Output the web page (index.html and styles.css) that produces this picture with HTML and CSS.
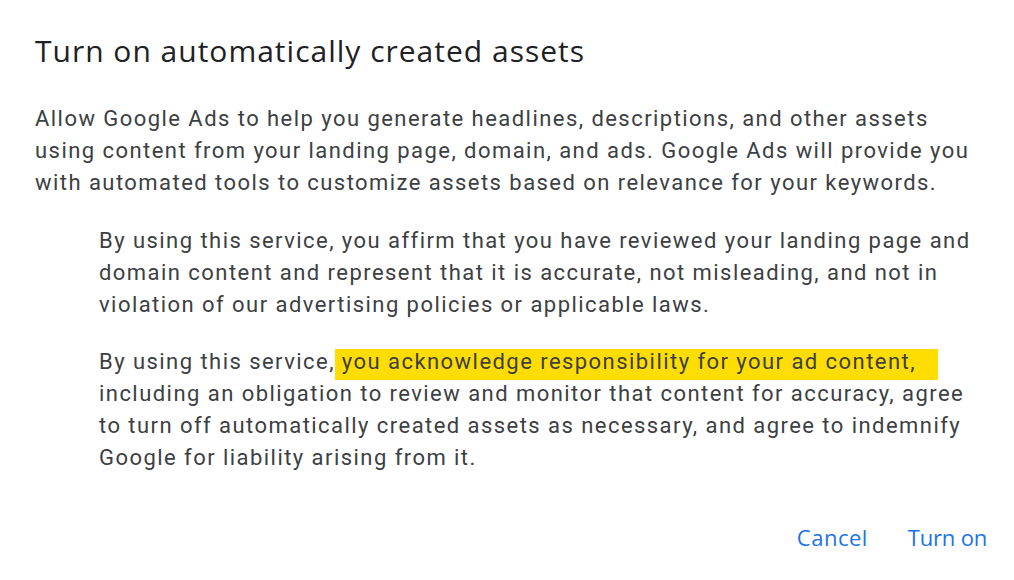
FILE: index.html
```html
<!DOCTYPE html>
<html>
<head>
<meta charset="utf-8">
<link rel="stylesheet" href="styles.css">
</head>
<body>
<div class="dialog">
  <h1 class="title">Turn on automatically created assets</h1>
  <p class="lead">Allow Google Ads to help you generate headlines, descriptions, and other assets using content from your landing page, domain, and ads. Google Ads will provide you with automated tools to customize assets based on relevance for your keywords.</p>
  <div class="terms">
    <p class="term">By using this service, you affirm that you have reviewed your landing page and domain content and represent that it is accurate, not misleading, and not in violation of our advertising policies or applicable laws.</p>
    <p class="term">By using this service,<mark class="hl"> you acknowledge responsibility for your ad content,</mark> including an obligation to review and monitor that content for accuracy, agree to turn off automatically created assets as necessary, and agree to indemnify Google for liability arising from it.</p>
  </div>
  <div class="actions">
    <button class="btn btn-cancel">Cancel</button>
    <button class="btn btn-confirm">Turn on</button>
  </div>
</div>
</body>
</html>
```
FILE: styles.css
```css
html, body {
  margin: 0;
  padding: 0;
  background: #ffffff;
}
.dialog {
  width: 1014px;
  height: 580px;
  box-sizing: border-box;
  padding: 29px 27px 0 35px;
  display: flex;
  flex-direction: column;
}
.title {
  margin: 0;
  font-family: "Open Sans", Roboto, sans-serif;
  font-weight: 400;
  font-size: 30px;
  line-height: 44px;
  letter-spacing: 1px;
  color: #202124;
}
.lead, .term {
  font-family: Roboto, "Liberation Sans", sans-serif;
  font-size: 22px;
  line-height: 32px;
  letter-spacing: 1.45px;
  color: #3c4043;
  margin: 0;
}
.lead {
  margin-top: 30px;
}
.terms {
  padding-left: 64px;
  margin-top: 26px;
  display: flex;
  flex-direction: column;
  gap: 25px;
}
.hl {
  background: #ffdd00;
  color: #3c4043;
  padding: 0 22px 6px 0;
}
.actions {
  margin-top: auto;
  margin-bottom: 28px;
  display: flex;
  justify-content: flex-end;
  gap: 40px;
}
.btn {
  background: none;
  border: 0;
  padding: 0;
  font-family: "Open Sans", Roboto, sans-serif;
  font-size: 22px;
  font-weight: 500;
  color: #1a73e8;
  cursor: pointer;
}
.btn-cancel {
  letter-spacing: 0.5px;
}
.btn-confirm {
  letter-spacing: -0.2px;
}
```
